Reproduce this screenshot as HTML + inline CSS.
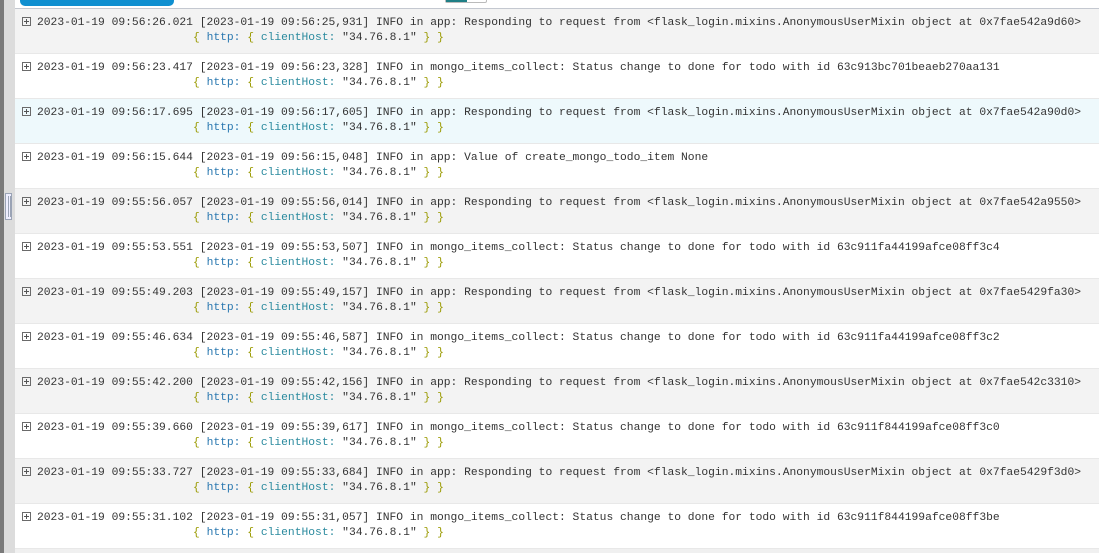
<!DOCTYPE html>
<html><head><style>
*{margin:0;padding:0;box-sizing:border-box}
body{width:1099px;height:553px;overflow:hidden;background:#fff;position:relative;font-family:"Liberation Mono","DejaVu Sans Mono",monospace;font-size:11.3px;color:#333}
.lb1{position:absolute;left:0;top:0;width:4px;height:553px;background:#7a7a7a}
.lb2{position:absolute;left:4px;top:0;width:11px;height:553px;background:#dcdcdc}
.handle{position:absolute;left:5px;top:193px;width:7px;height:27px;background:#eef;border:1px solid #9aa3b5}
.handle:after{content:"";position:absolute;left:2px;top:2px;width:1px;height:21px;background:#9aa3b5;box-shadow:2px 0 0 #9aa3b5}
.btn{position:absolute;left:20px;top:-6px;width:154px;height:12px;background:#0f8fd0;border-radius:5px}
.tog{position:absolute;left:445px;top:-4px;width:42px;height:7px;border:1px solid #bbb;border-radius:2px;background:#fff}
.tog:before{content:"";position:absolute;left:0;top:0;width:21px;height:5px;background:#1f7f86}
.hdr{position:absolute;left:15px;top:8px;width:1084px;height:1px;background:#c4c8d0}
.rows{position:absolute;left:15px;top:9px;width:1084px}
.row{height:45px;padding:7px 0 0 7px;border-bottom:1px solid #e8e8e8;line-height:15px;white-space:pre}
.l2{padding-left:171px}
.g{background:#f3f3f3}.w{background:#fff}.b{background:#eef9fc}
.ic{display:inline-block;width:9px;height:9px;border:1px solid #6a6a6a;position:relative;vertical-align:-1px;margin-right:6px}
.ic:before{content:"";position:absolute;left:1px;top:3px;width:5px;height:1px;background:#555}
.ic:after{content:"";position:absolute;left:3px;top:1px;width:1px;height:5px;background:#555}
.br{color:#9a9a00}.k{color:#2a78b0}.k2{color:#2a8a9e}
.foot{position:absolute;left:15px;top:549px;width:1084px;height:4px;background:#f0f0f0}
</style></head><body>
<div class="lb1"></div><div class="lb2"></div><div class="handle"></div>
<div class="btn"></div><div class="tog"></div><div class="hdr"></div>
<div class="rows">
<div class="row g"><div><span class="ic"></span>2023-01-19 09:56:26.021 [2023-01-19 09:56:25,931] INFO in app: Responding to request from &lt;flask_login.mixins.AnonymousUserMixin object at 0x7fae542a9d60&gt;</div><div class="l2"><span class="br">{</span> <span class="k">http:</span> <span class="br">{</span> <span class="k2">clientHost:</span> "34.76.8.1" <span class="br">}</span> <span class="br">}</span></div></div>
<div class="row w"><div><span class="ic"></span>2023-01-19 09:56:23.417 [2023-01-19 09:56:23,328] INFO in mongo_items_collect: Status change to done for todo with id 63c913bc701beaeb270aa131</div><div class="l2"><span class="br">{</span> <span class="k">http:</span> <span class="br">{</span> <span class="k2">clientHost:</span> "34.76.8.1" <span class="br">}</span> <span class="br">}</span></div></div>
<div class="row b"><div><span class="ic"></span>2023-01-19 09:56:17.695 [2023-01-19 09:56:17,605] INFO in app: Responding to request from &lt;flask_login.mixins.AnonymousUserMixin object at 0x7fae542a90d0&gt;</div><div class="l2"><span class="br">{</span> <span class="k">http:</span> <span class="br">{</span> <span class="k2">clientHost:</span> "34.76.8.1" <span class="br">}</span> <span class="br">}</span></div></div>
<div class="row w"><div><span class="ic"></span>2023-01-19 09:56:15.644 [2023-01-19 09:56:15,048] INFO in app: Value of create_mongo_todo_item None</div><div class="l2"><span class="br">{</span> <span class="k">http:</span> <span class="br">{</span> <span class="k2">clientHost:</span> "34.76.8.1" <span class="br">}</span> <span class="br">}</span></div></div>
<div class="row g"><div><span class="ic"></span>2023-01-19 09:55:56.057 [2023-01-19 09:55:56,014] INFO in app: Responding to request from &lt;flask_login.mixins.AnonymousUserMixin object at 0x7fae542a9550&gt;</div><div class="l2"><span class="br">{</span> <span class="k">http:</span> <span class="br">{</span> <span class="k2">clientHost:</span> "34.76.8.1" <span class="br">}</span> <span class="br">}</span></div></div>
<div class="row w"><div><span class="ic"></span>2023-01-19 09:55:53.551 [2023-01-19 09:55:53,507] INFO in mongo_items_collect: Status change to done for todo with id 63c911fa44199afce08ff3c4</div><div class="l2"><span class="br">{</span> <span class="k">http:</span> <span class="br">{</span> <span class="k2">clientHost:</span> "34.76.8.1" <span class="br">}</span> <span class="br">}</span></div></div>
<div class="row g"><div><span class="ic"></span>2023-01-19 09:55:49.203 [2023-01-19 09:55:49,157] INFO in app: Responding to request from &lt;flask_login.mixins.AnonymousUserMixin object at 0x7fae5429fa30&gt;</div><div class="l2"><span class="br">{</span> <span class="k">http:</span> <span class="br">{</span> <span class="k2">clientHost:</span> "34.76.8.1" <span class="br">}</span> <span class="br">}</span></div></div>
<div class="row w"><div><span class="ic"></span>2023-01-19 09:55:46.634 [2023-01-19 09:55:46,587] INFO in mongo_items_collect: Status change to done for todo with id 63c911fa44199afce08ff3c2</div><div class="l2"><span class="br">{</span> <span class="k">http:</span> <span class="br">{</span> <span class="k2">clientHost:</span> "34.76.8.1" <span class="br">}</span> <span class="br">}</span></div></div>
<div class="row g"><div><span class="ic"></span>2023-01-19 09:55:42.200 [2023-01-19 09:55:42,156] INFO in app: Responding to request from &lt;flask_login.mixins.AnonymousUserMixin object at 0x7fae542c3310&gt;</div><div class="l2"><span class="br">{</span> <span class="k">http:</span> <span class="br">{</span> <span class="k2">clientHost:</span> "34.76.8.1" <span class="br">}</span> <span class="br">}</span></div></div>
<div class="row w"><div><span class="ic"></span>2023-01-19 09:55:39.660 [2023-01-19 09:55:39,617] INFO in mongo_items_collect: Status change to done for todo with id 63c911f844199afce08ff3c0</div><div class="l2"><span class="br">{</span> <span class="k">http:</span> <span class="br">{</span> <span class="k2">clientHost:</span> "34.76.8.1" <span class="br">}</span> <span class="br">}</span></div></div>
<div class="row g"><div><span class="ic"></span>2023-01-19 09:55:33.727 [2023-01-19 09:55:33,684] INFO in app: Responding to request from &lt;flask_login.mixins.AnonymousUserMixin object at 0x7fae5429f3d0&gt;</div><div class="l2"><span class="br">{</span> <span class="k">http:</span> <span class="br">{</span> <span class="k2">clientHost:</span> "34.76.8.1" <span class="br">}</span> <span class="br">}</span></div></div>
<div class="row w"><div><span class="ic"></span>2023-01-19 09:55:31.102 [2023-01-19 09:55:31,057] INFO in mongo_items_collect: Status change to done for todo with id 63c911f844199afce08ff3be</div><div class="l2"><span class="br">{</span> <span class="k">http:</span> <span class="br">{</span> <span class="k2">clientHost:</span> "34.76.8.1" <span class="br">}</span> <span class="br">}</span></div></div>
</div>
<div class="foot"></div>
</body></html>
